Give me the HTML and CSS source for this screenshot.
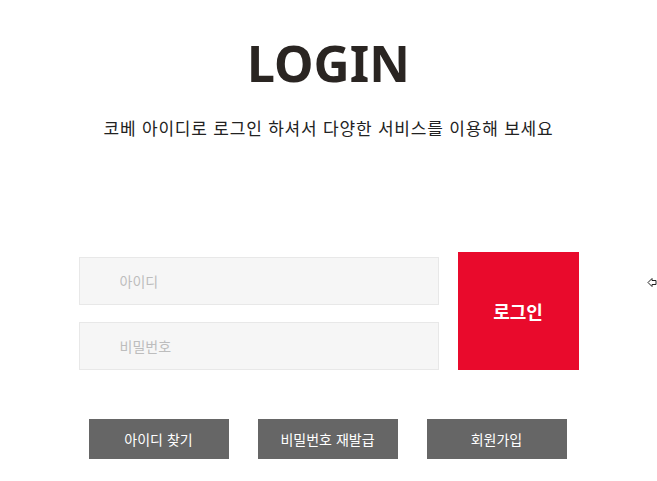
FILE: index.html
```html
<!DOCTYPE html>
<html lang="ko">
<head>
<meta charset="utf-8">
<title>LOGIN</title>
<link rel="stylesheet" href="styles.css">
</head>
<body>
<div class="page">
  <h1 class="title">LOGIN</h1>
  <p class="subtitle">코베 아이디로 로그인 하셔서 다양한 서비스를 이용해 보세요</p>
  <form class="login-form">
    <div class="fields">
      <input class="field" type="text" placeholder="아이디">
      <input class="field" type="password" placeholder="비밀번호">
    </div>
    <button class="submit" type="button">로그인</button>
  </form>
  <div class="links">
    <a class="link-btn" href="#">아이디 찾기</a>
    <a class="link-btn" href="#">비밀번호 재발급</a>
    <a class="link-btn" href="#">회원가입</a>
  </div>
</div>
<svg class="cursor-arrow" width="10" height="11" viewBox="0 0 10 11">
  <path d="M1 5.5 L5 1.5 L5 3.5 L9 3.5 L9 7.5 L5 7.5 L5 9.5 Z" fill="#fff" stroke="#222" stroke-width="1"/>
</svg>
</body>
</html>
```
FILE: styles.css
```css
html, body {
  margin: 0;
  padding: 0;
  background: #fff;
}
body {
  font-family: "Noto Sans CJK KR", "Noto Sans", sans-serif;
  color: #222;
  width: 657px;
  height: 481px;
  overflow: hidden;
  position: relative;
}
.page {
  display: flex;
  flex-direction: column;
  align-items: center;
  padding-top: 33px;
}
.title {
  margin: 0;
  font-family: "Noto Sans", "Open Sans", sans-serif;
  font-weight: 700;
  font-size: 50px;
  line-height: 60px;
  color: #2a2522;
  letter-spacing: 0;
}
.subtitle {
  margin: 23px 0 0;
  font-size: 17px;
  line-height: 24px;
  letter-spacing: 0.8px;
  font-weight: 400;
  color: #222;
}
.login-form {
  margin-top: 112px;
  width: 500px;
  display: flex;
  justify-content: space-between;
  align-items: flex-end;
}
.fields {
  display: flex;
  flex-direction: column;
  gap: 17px;
  width: 360px;
}
.field {
  box-sizing: border-box;
  height: 48px;
  width: 360px;
  margin: 0;
  border: 1px solid #e8e8e8;
  background: #f6f6f6;
  padding: 0 0 0 40px;
  font-family: "Noto Sans CJK KR", sans-serif;
  font-size: 14px;
  color: #333;
  outline: none;
}
.field::placeholder {
  color: #bdbdbd;
}
.submit {
  width: 121px;
  height: 118px;
  border: 0;
  margin: 0;
  background: #e90a2c;
  color: #fff;
  font-family: "Noto Sans CJK KR", sans-serif;
  font-weight: 700;
  font-size: 18px;
  cursor: pointer;
}
.links {
  margin-top: 49px;
  margin-right: 2px;
  display: flex;
  gap: 29px;
}
.link-btn {
  width: 140px;
  height: 40px;
  background: #666;
  color: #fff;
  text-decoration: none;
  font-size: 14px;
  display: flex;
  align-items: center;
  justify-content: center;
}
.cursor-arrow {
  position: absolute;
  left: 647px;
  top: 277px;
}
```
